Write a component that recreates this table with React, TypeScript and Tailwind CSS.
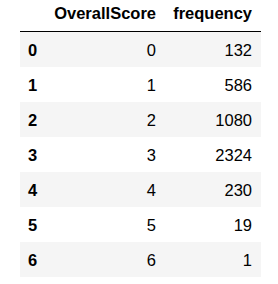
export default function App() {
  const rows: [number, number, number][] = [
    [0, 0, 132],
    [1, 1, 586],
    [2, 2, 1080],
    [3, 3, 2324],
    [4, 4, 230],
    [5, 5, 19],
    [6, 6, 1],
  ];
  return (
    <div className="w-[278px] h-[284px] bg-white text-black text-[16.5px] leading-[16px] pl-[20px]" style={{ fontFamily: '"Liberation Sans", Arial, sans-serif' }}>
      <div className="w-[241px]">
        <div className="grid grid-cols-[26px_119px_96px] h-[32px] pt-[5px] border-b border-black font-bold">
          <div />
          <div className="text-right pr-[9px]">OverallScore</div>
          <div className="text-right pr-[9px]">frequency</div>
        </div>
        {rows.map(([i, s, f]) => (
          <div key={i} className={`grid grid-cols-[26px_119px_96px] h-[35px] items-center ${i % 2 === 0 ? "bg-[#f5f5f5]" : ""}`}>
            <div className="pl-[8px] font-bold">{i}</div>
            <div className="text-right pr-[9px]">{s}</div>
            <div className="text-right pr-[9px]">{f}</div>
          </div>
        ))}
      </div>
    </div>
  );
}
